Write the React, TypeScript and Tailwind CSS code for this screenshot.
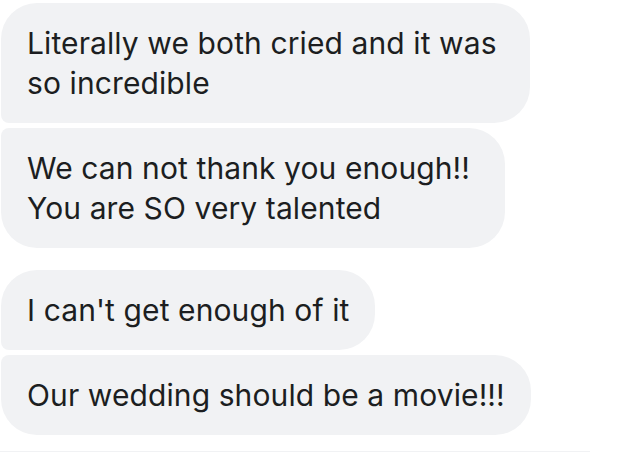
const bubble =
  "bg-[#f1f2f4] text-[#1c1e21] px-[26px] py-[20px] text-[30px] leading-[40px] tracking-[0.1px]";

function App() {
  return (
    <div
      className="w-[639px] h-[453px] bg-white overflow-hidden flex flex-col relative"
      style={{ fontFamily: "Inter, 'Noto Sans', sans-serif" }}
    >
      <div className="flex flex-col items-start pt-[3px] pl-px gap-[5px]">
        <div className={`${bubble} w-[529px] rounded-[36px] rounded-bl-[8px]`}>
          Literally we both cried and it was
          <br />
          so incredible
        </div>
        <div className={`${bubble} w-[504px] rounded-[36px] rounded-tl-[8px]`}>
          We can not thank you enough!!
          <br />
          You are SO very talented
        </div>
      </div>
      <div className="flex flex-col items-start pt-[22px] pl-px gap-[5px]">
        <div className={`${bubble} rounded-[36px] rounded-bl-[8px]`}>
          I can't get enough of it
        </div>
        <div className={`${bubble} rounded-[36px] rounded-tl-[8px]`}>
          Our wedding should be a movie!!!
        </div>
      </div>
      <div className="mt-auto mb-px h-px w-[590px] bg-[#f1f2f4]" />
    </div>
  );
}

export default App;
